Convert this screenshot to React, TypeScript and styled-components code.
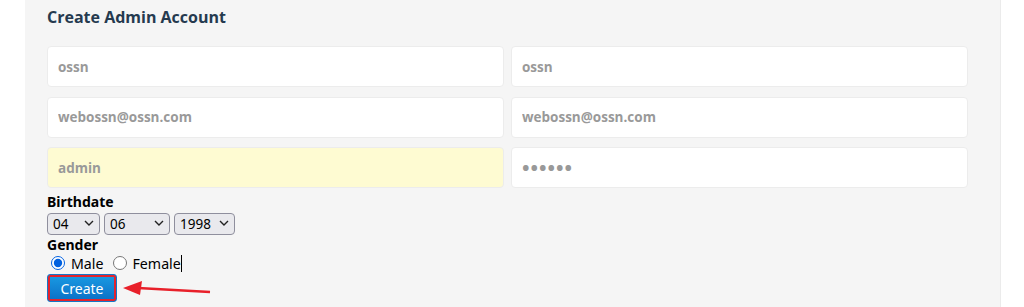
import styled, { createGlobalStyle } from "styled-components";

const GlobalStyle = createGlobalStyle`
  body {
    margin: 0;
    background: #ffffff;
    font-family: "Open Sans", "Liberation Sans", sans-serif;
  }
`;

export default function App() {
  return (
    <>
      <GlobalStyle />
      <Panel>
        <Title>Create Admin Account</Title>
        <Fields>
          <Field placeholder="ossn" />
          <Field placeholder="ossn" />
          <Field placeholder="webossn@ossn.com" />
          <Field placeholder="webossn@ossn.com" />
          <Field placeholder="admin" $filled />
          <Field placeholder="" type="password" defaultValue="123456" />
        </Fields>
        <Label $gap={5}>Birthdate</Label>
        <SelectRow>
          <SelectBox $width={53}>
            <Select defaultValue="04">
              <option>04</option>
            </Select>
            <Chevron />
          </SelectBox>
          <SelectBox $width={66}>
            <Select defaultValue="06">
              <option>06</option>
            </Select>
            <Chevron />
          </SelectBox>
          <SelectBox $width={61}>
            <Select defaultValue="1998">
              <option>1998</option>
            </Select>
            <Chevron />
          </SelectBox>
        </SelectRow>
        <Label $gap={2}>Gender</Label>
        <RadioRow>
          <RadioLabel>
            <Radio type="radio" name="gender" defaultChecked />
            Male
          </RadioLabel>
          <RadioLabel>
            <Radio type="radio" name="gender" />
            Female
            <Caret />
          </RadioLabel>
        </RadioRow>
        <ButtonRow>
          <CreateButton>Create</CreateButton>
          <Arrow width="90" height="16" viewBox="0 0 90 16">
            <path d="M88 11 L16 7" stroke="#e8202a" strokeWidth="2.5" fill="none" />
            <path d="M1 7 L20 0 L18 14 Z" fill="#e8202a" />
          </Arrow>
        </ButtonRow>
      </Panel>
    </>
  );
}

function Chevron() {
  return (
    <ChevronIcon width="10" height="6" viewBox="0 0 10 6">
      <path d="M1 1 L5 5 L9 1" stroke="#222" strokeWidth="1.4" fill="none" />
    </ChevronIcon>
  );
}

const Panel = styled.div`
  margin-left: 25px;
  width: 976px;
  height: 307px;
  box-sizing: border-box;
  background: #f5f5f5;
  border-right: 1px solid #ebebeb;
  padding: 7px 33px 0 22px;
  overflow: hidden;
`;

const Title = styled.h3`
  margin: 0 0 19px;
  font-size: 16px;
  line-height: 20px;
  font-weight: 700;
  color: #253a4f;
`;

const Fields = styled.div`
  display: grid;
  grid-template-columns: 457px 457px;
  grid-auto-rows: 41px;
  column-gap: 7px;
  row-gap: 9.5px;
`;

const Field = styled.input<{ $filled?: boolean }>`
  height: 41px;
  box-sizing: border-box;
  border: 1px solid #ececec;
  border-radius: 4px;
  background: ${(p) => (p.$filled ? "#fefbd2" : "#ffffff")};
  padding: 0 10px;
  font-family: "Open Sans", sans-serif;
  font-size: 13.5px;
  font-weight: 700;
  color: #999;
  outline: none;
  &::placeholder {
    color: #999;
    opacity: 1;
  }
  &[type="password"] {
    font-size: 20px;
    letter-spacing: 1px;
  }
`;

const Label = styled.div<{ $gap: number }>`
  margin-top: ${(p) => p.$gap}px;
  font-family: "Noto Sans", sans-serif;
  font-size: 14px;
  line-height: 17px;
  font-weight: 700;
  color: #000;
`;

const SelectRow = styled.div`
  display: flex;
  gap: 4px;
  margin-top: 2px;
`;

const SelectBox = styled.div<{ $width: number }>`
  position: relative;
  width: ${(p) => p.$width}px;
  height: 22px;
`;

const Select = styled.select`
  appearance: none;
  width: 100%;
  height: 100%;
  box-sizing: border-box;
  border: 1px solid #8f8f9d;
  border-radius: 4px;
  background: #e9e9ed;
  padding: 0 0 0 5px;
  font-family: "Noto Sans", sans-serif;
  font-size: 13.5px;
  color: #000;
`;

const ChevronIcon = styled.svg`
  position: absolute;
  right: 6px;
  top: 8px;
  pointer-events: none;
`;

const RadioRow = styled.div`
  display: flex;
  gap: 9px;
  padding-left: 4px;
  height: 20px;
  align-items: center;
`;

const RadioLabel = styled.label`
  display: flex;
  align-items: center;
  gap: 6px;
  font-family: "Noto Sans", sans-serif;
  font-size: 14.2px;
  color: #000;
`;

const Radio = styled.input`
  margin: 0;
  width: 14px;
  height: 14px;
  accent-color: #0060df;
`;

const Caret = styled.span`
  display: inline-block;
  width: 1px;
  height: 17px;
  margin-left: -6px;
  background: #000;
`;

const ButtonRow = styled.div`
  display: flex;
  align-items: center;
  gap: 5px;
  margin-top: 1px;
`;

const CreateButton = styled.button`
  width: 70px;
  height: 28px;
  border: 1px solid #1577c7;
  border-radius: 3px;
  background: linear-gradient(#1a9be3, #0b6fc6);
  box-shadow: inset 0 0 0 2px #e3232d;
  color: #fff;
  font-family: "Noto Sans", sans-serif;
  font-size: 14px;
  padding: 0;
`;

const Arrow = styled.svg`
  display: block;
  margin-top: 2px;
`;
